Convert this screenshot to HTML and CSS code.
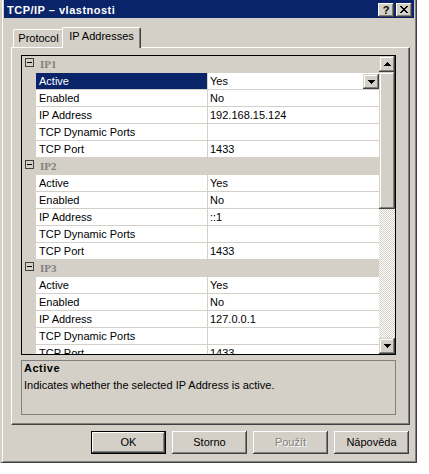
FILE: index.html
```html
<!DOCTYPE html>
<html lang="cs">
<head>
<meta charset="utf-8">
<title>TCP/IP – vlastnosti</title>
<link rel="stylesheet" href="styles.css">
</head>
<body>
<div class="dialog">
  <div class="titlebar">
    <span class="title">TCP/IP – vlastnosti</span>
    <div class="cap-btns">
      <div class="cap-btn help">?</div>
      <div class="cap-btn">
        <svg width="8" height="7" viewBox="0 0 8 7" shape-rendering="crispEdges"><path d="M0 0h2v1H0zM6 0h2v1H6zM1 1h2v1H1zM5 1h2v1H5zM2 2h4v1H2zM3 3h2v1H3zM2 4h4v1H2zM1 5h2v1H1zM5 5h2v1H5zM0 6h2v1H0zM6 6h2v1H6z" fill="#000"/></svg>
      </div>
    </div>
  </div>

  <div class="tabs">
    <div class="tab">Protocol</div>
    <div class="tab active">IP Addresses</div>
  </div>

  <div class="panel">
    <div class="grid">
      <div class="rows">
        <div class="cat"><span class="exp"><span class="minus"></span></span><span class="cat-name">IP1</span></div>
        <div class="prop"><span class="pname sel">Active</span><span class="pval">Yes<span class="dd"><svg width="7" height="4" viewBox="0 0 7 4" shape-rendering="crispEdges"><path d="M0 0h7v1H6v1H5v1H4v1H3V3H2V2H1V1H0z" fill="#000"/></svg></span></span></div>
        <div class="prop"><span class="pname">Enabled</span><span class="pval">No</span></div>
        <div class="prop"><span class="pname">IP Address</span><span class="pval">192.168.15.124</span></div>
        <div class="prop"><span class="pname">TCP Dynamic Ports</span><span class="pval"></span></div>
        <div class="prop"><span class="pname">TCP Port</span><span class="pval">1433</span></div>

        <div class="cat"><span class="exp"><span class="minus"></span></span><span class="cat-name">IP2</span></div>
        <div class="prop"><span class="pname">Active</span><span class="pval">Yes</span></div>
        <div class="prop"><span class="pname">Enabled</span><span class="pval">No</span></div>
        <div class="prop"><span class="pname">IP Address</span><span class="pval">::1</span></div>
        <div class="prop"><span class="pname">TCP Dynamic Ports</span><span class="pval"></span></div>
        <div class="prop"><span class="pname">TCP Port</span><span class="pval">1433</span></div>

        <div class="cat"><span class="exp"><span class="minus"></span></span><span class="cat-name">IP3</span></div>
        <div class="prop"><span class="pname">Active</span><span class="pval">Yes</span></div>
        <div class="prop"><span class="pname">Enabled</span><span class="pval">No</span></div>
        <div class="prop"><span class="pname">IP Address</span><span class="pval">127.0.0.1</span></div>
        <div class="prop"><span class="pname">TCP Dynamic Ports</span><span class="pval"></span></div>
        <div class="prop"><span class="pname">TCP Port</span><span class="pval">1433</span></div>
      </div>
      <div class="vscroll">
        <div class="sbtn"><svg width="7" height="4" viewBox="0 0 7 4" shape-rendering="crispEdges"><path d="M3 0h1v1h1v1h1v1h1v1H0V3h1V2h1V1h1z" fill="#000"/></svg></div>
        <div class="thumb"></div>
        <div class="track"></div>
        <div class="sbtn"><svg width="7" height="4" viewBox="0 0 7 4" shape-rendering="crispEdges"><path d="M0 0h7v1H6v1H5v1H4v1H3V3H2V2H1V1H0z" fill="#000"/></svg></div>
      </div>
    </div>

    <div class="desc">
      <div class="desc-title">Active</div>
      <div class="desc-text">Indicates whether the selected IP Address is active.</div>
    </div>
  </div>

  <div class="buttons">
    <div class="btn default">OK</div>
    <div class="btn">Storno</div>
    <div class="btn disabled">Použít</div>
    <div class="btn">Nápověda</div>
  </div>
</div>
</body>
</html>
```

FILE: styles.css
```css
* { box-sizing: border-box; }

html, body {
  margin: 0;
  padding: 0;
  background: #fff;
}

body {
  font-family: "Liberation Sans", Arial, sans-serif;
  font-size: 11px;
  color: #000;
}

.dialog {
  width: 417px;
  height: 463px;
  background: #d4d0c8;
  border-left: 2px solid #d4d0c8;
  border-right: 1px solid #404040;
  border-bottom: 1px solid #404040;
  padding: 0 2px 2px 2px;
  box-shadow: inset 1px 0 #fff, inset -1px -1px #808080;
  display: flex;
  flex-direction: column;
}

/* caption */
.titlebar {
  height: 18px;
  flex: none;
  background: #0a246a;
  display: flex;
  align-items: flex-start;
  padding: 0 2px 0 3px;
}

.title {
  flex: 1;
  color: #fff;
  font-weight: bold;
  letter-spacing: 0.5px;
  line-height: 16px;
  padding-top: 2px;
  white-space: nowrap;
}

.cap-btns {
  display: flex;
  gap: 2px;
  margin-top: 3px;
}

.cap-btn {
  width: 16px;
  height: 14px;
  background: #d4d0c8;
  box-shadow: inset -1px -1px #404040, inset 1px 1px #fff, inset -2px -2px #808080;
  display: flex;
  align-items: center;
  justify-content: center;
  padding-bottom: 1px;
}

.cap-btn.help {
  font-weight: bold;
  font-size: 11px;
  line-height: 12px;
}

/* tabs */
.tabs {
  flex: none;
  display: flex;
  align-items: flex-end;
  height: 20px;
  margin: 9px 0 0 7px;
  padding-left: 2px;
}

.tab {
  height: 18px;
  background: #d4d0c8;
  border-top: 1px solid #fff;
  border-left: 1px solid #fff;
  border-right: 1px solid #404040;
  box-shadow: inset -1px 0 #808080;
  border-top-left-radius: 2px;
  border-top-right-radius: 2px;
  text-align: center;
  line-height: 15px;
  padding-top: 1px;
  width: 51px;
}

.tab.active {
  position: relative;
  z-index: 1;
  width: 79px;
  height: 21px;
  margin-left: -2px;
  margin-bottom: -1px;
  line-height: 17px;
  padding-top: 0;
}

/* tab page */
.panel {
  flex: none;
  width: 399px;
  height: 378px;
  margin-left: 7px;
  border-top: 1px solid #fff;
  border-left: 1px solid #fff;
  border-right: 1px solid #404040;
  border-bottom: 1px solid #404040;
  box-shadow: inset -1px -1px #808080;
  padding: 7px 0 0 9px;
  display: flex;
  flex-direction: column;
}

/* property grid */
.grid {
  width: 375px;
  height: 300px;
  border: 1px solid #000;
  background: #d4d0c8;
  display: flex;
}

.rows {
  flex: 1;
  overflow: hidden;
}

.cat {
  height: 17px;
  display: flex;
  align-items: flex-start;
}

.exp {
  width: 9px;
  height: 9px;
  margin: 2px 0 0 3px;
  border: 1px solid #404040;
  display: flex;
  align-items: center;
  justify-content: center;
}

.minus {
  width: 5px;
  height: 1px;
  background: #000;
}

.cat-name {
  margin-left: 6px;
  font-family: "Liberation Serif", "Times New Roman", serif;
  font-weight: bold;
  font-size: 11px;
  line-height: 16px;
  color: #808080;
}

.prop {
  height: 17px;
  display: flex;
  padding-left: 14px;
}

.pname,
.pval {
  height: 17px;
  line-height: 16px;
  background: #fff;
  border-bottom: 1px solid #d4d0c8;
  white-space: nowrap;
}

.pname {
  width: 172px;
  padding-left: 3px;
  border-right: 1px solid #d4d0c8;
}

.pname.sel {
  background: #0a246a;
  color: #fff;
}

.pval {
  flex: 1;
  padding-left: 2px;
  display: flex;
  justify-content: space-between;
  align-items: flex-start;
}

.dd {
  width: 16px;
  height: 15px;
  margin-top: 1px;
  background: #d4d0c8;
  box-shadow: inset -1px -1px #404040, inset 1px 1px #d4d0c8, inset -2px -2px #808080, inset 2px 2px #fff;
  display: flex;
  align-items: center;
  justify-content: center;
}

.vscroll {
  width: 16px;
  flex: none;
  display: flex;
  flex-direction: column;
}

.sbtn {
  height: 16px;
  flex: none;
  background: #d4d0c8;
  box-shadow: inset -1px -1px #404040, inset 1px 1px #d4d0c8, inset -2px -2px #808080, inset 2px 2px #fff;
  display: flex;
  align-items: center;
  justify-content: center;
}

.thumb {
  height: 137px;
  flex: none;
  background: #d4d0c8;
  box-shadow: inset -1px -1px #404040, inset 1px 1px #d4d0c8, inset -2px -2px #808080, inset 2px 2px #fff;
}

.track {
  flex: 1;
  background: repeating-conic-gradient(#fff 0 25%, #d4d0c8 0 50%) 0 0 / 2px 2px;
}

/* description pane */
.desc {
  width: 375px;
  height: 55px;
  margin-top: 5px;
  border: 1px solid #808080;
  padding-left: 2px;
}

.desc-title {
  font-weight: bold;
  letter-spacing: 0.5px;
  line-height: 15px;
}

.desc-text {
  line-height: 17px;
  margin-top: 1px;
}

/* buttons */
.buttons {
  flex: none;
  display: flex;
  justify-content: flex-end;
  gap: 6px;
  margin: 6px 5px 0 0;
}

.btn {
  width: 75px;
  height: 23px;
  background: #d4d0c8;
  box-shadow: inset -1px -1px #404040, inset 1px 1px #fff, inset -2px -2px #808080;
  text-align: center;
  line-height: 23px;
}

.btn.default {
  box-shadow: inset 0 0 0 1px #000, inset -2px -2px #404040, inset 2px 2px #fff, inset -3px -3px #808080;
}

.btn.disabled {
  color: #808080;
  text-shadow: 1px 1px #fff;
}
```
